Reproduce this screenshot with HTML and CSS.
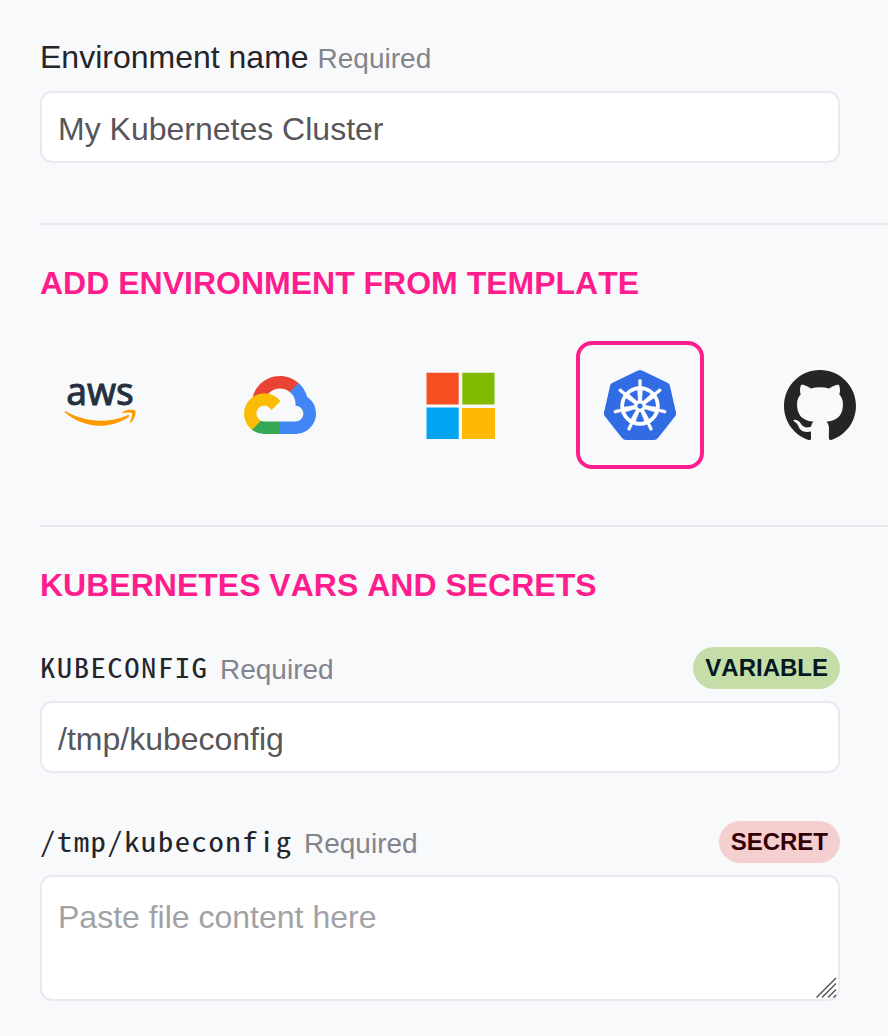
FILE: index.html
```html
<!DOCTYPE html>
<html lang="en">
<head>
<meta charset="utf-8">
<title>Environment</title>
<link rel="stylesheet" href="styles.css">
</head>
<body>
<form class="page">
  <section class="field field-name">
    <div class="label-row"><label for="name"><span class="label">Environment name</span><span class="required">Required</span></label></div>
    <input class="control" id="name" type="text" value="My Kubernetes Cluster">
  </section>

  <section class="section templates-section">
    <h2 class="heading">Add environment from template</h2>
    <div class="templates">
      <div class="template">
        <svg class="aws" width="72" height="43" viewBox="0 0 304 182" overflow="visible">
          <text class="aws-word" x="9" y="95" textLength="286" lengthAdjust="spacingAndGlyphs">aws</text>
          <g fill="#f90"><path d="M273.5 143.7c-32.9 24.3-80.7 37.2-121.8 37.2-57.6 0-109.5-21.3-148.7-56.7-3.1-2.8-.3-6.6 3.4-4.4 42.4 24.6 94.7 39.5 148.8 39.5 36.5 0 76.6-7.6 113.5-23.2 5.5-2.5 10.2 3.6 4.8 7.6z"/><path d="M287.2 128.1c-4.2-5.4-27.8-2.6-38.5-1.3-3.2.4-3.7-2.4-.8-4.5 18.8-13.2 49.7-9.4 53.3-5 3.6 4.5-1 35.4-18.6 50.2-2.7 2.3-5.3 1.1-4.1-1.9 4-9.9 12.9-32.2 8.7-37.5z"/></g>
        </svg>
      </div>
      <div class="template">
        <svg width="72" height="58" viewBox="0 0 256 206">
          <path fill="#ea4335" d="M170.25 56.82L192.5 34.57l1.49-9.37C153.44-11.68 88.98-7.5 52.42 33.92 42.27 45.42 34.73 59.76 30.72 74.57l7.97-1.12 44.5-7.34 3.44-3.51c19.8-21.74 53.27-24.67 76.13-6.17z"/>
          <path fill="#4285f4" d="M224.2 73.92a100.2 100.2 0 0 0-30.21-48.72l-31.23 31.23a55.5 55.5 0 0 1 20.38 44.04v5.54c15.35 0 27.8 12.45 27.8 27.8s-12.45 27.48-27.8 27.48h-55.68l-5.46 5.93v33.34l5.46 5.23h55.68c39.93.31 72.55-31.49 72.86-71.42a72.3 72.3 0 0 0-31.8-60.45"/>
          <path fill="#34a853" d="M71.87 205.8h55.59v-44.51H71.87a27.3 27.3 0 0 1-11.48-2.5l-8.01 2.44-22.41 22.26-1.95 7.55a72.2 72.2 0 0 0 43.85 14.76"/>
          <path fill="#fbbc05" d="M71.87 61.43A72.3 72.3 0 0 0 28.27 190.98l32.25-32.25a27.8 27.8 0 1 1 36.78-36.77l32.25-32.25a72.2 72.2 0 0 0-57.68-28.28"/>
        </svg>
      </div>
      <div class="template">
        <svg width="70" height="67" viewBox="0 0 70 67">
          <path fill="#f65022" d="M1.5.7h32.2v31.7H1.5z"/><path fill="#80ba01" d="M37.3.7h32.2v31.7H37.3z"/><path fill="#02a4f2" d="M1.5 35.5h32.2V67H1.5z"/><path fill="#ffb902" d="M37 36h33v31H37z"/>
        </svg>
      </div>
      <div class="template selected">
        <svg width="72" height="70" viewBox="0 0 72 70">
          <path fill="#326ce5" d="M34 .5q2-1 4 0l25.5 12.2q2 1 2.4 3L72 42.5q.5 2-1 4L54 68q-1.6 2-4 2H22q-2.4 0-4-2L1 46.500q-1.500-2-1-4L6.100 15.700q.4-2 2.400-3z"/>
          <g fill="none" stroke="#fff">
            <circle cx="36" cy="36" r="17.800" stroke-width="3.800"/>
            <circle cx="36" cy="36" r="4.300" stroke-width="3.400"/>
          </g>
          <defs><path id="spoke" fill="#fff" d="M34.300 31.500L33.500 19h1.200l-.2-8.300q0-1.500 1.500-1.500t1.500 1.500l-.2 8.300h1.200l-.8 12.500z" stroke="#fff" stroke-width=".4"/></defs>
          <use href="#spoke"/>
          <use href="#spoke" transform="rotate(51.430 36 36)"/>
          <use href="#spoke" transform="rotate(102.860 36 36)"/>
          <use href="#spoke" transform="rotate(154.290 36 36)"/>
          <use href="#spoke" transform="rotate(205.710 36 36)"/>
          <use href="#spoke" transform="rotate(257.140 36 36)"/>
          <use href="#spoke" transform="rotate(308.570 36 36)"/>
        </svg>
      </div>
      <div class="template">
        <svg width="72" height="70" viewBox="0 0 97.7 96" preserveAspectRatio="none"><path fill="#252528" d="M48.854 0C21.839 0 0 22 0 49.217c0 21.756 13.993 40.172 33.405 46.690 2.427.49 3.316-1.059 3.316-2.362 0-1.141-.08-5.052-.08-9.127-13.590 2.934-16.420-5.867-16.420-5.867-2.184-5.704-5.420-7.170-5.420-7.170-4.448-3.015.324-3.015.324-3.015 4.934.326 7.523 5.052 7.523 5.052 4.367 7.496 11.404 5.378 14.235 4.074.404-3.178 1.699-5.378 3.074-6.600-10.839-1.141-22.243-5.378-22.243-24.283 0-5.378 1.940-9.778 5.014-13.200-.485-1.222-2.184-6.275.486-13.038 0 0 4.125-1.304 13.426 5.052a46.970 46.970 0 0 1 12.214-1.630c4.125 0 8.330.571 12.213 1.630 9.302-6.356 13.427-5.052 13.427-5.052 2.670 6.763.970 11.816.485 13.038 3.155 3.422 5.015 7.822 5.015 13.200 0 18.905-11.404 23.060-22.324 24.283 1.780 1.548 3.316 4.481 3.316 9.126 0 6.600-.080 11.897-.080 13.526 0 1.304.890 2.853 3.316 2.364 19.412-6.520 33.405-24.935 33.405-46.691C97.707 22 75.788 0 48.854 0z"/></svg>
      </div>
    </div>
  </section>

  <section class="section">
    <h2 class="heading">Kubernetes vars and secrets</h2>
    <div class="field field-variable">
      <div class="label-row"><label for="config"><code class="key">KUBECONFIG</code><span class="required">Required</span></label><span class="badge variable">VARIABLE</span></div>
      <input class="control" id="config" type="text" value="/tmp/kubeconfig">
    </div>
    <div class="field field-secret">
      <div class="label-row"><label for="content"><code class="key key-path">/tmp/kubeconfig</code><span class="required">Required</span></label><span class="badge secret">SECRET</span></div>
      <div class="area-wrap">
        <textarea class="control area" id="content" placeholder="Paste file content here"></textarea>
        <svg class="grip" width="22" height="22" viewBox="0 0 22 22"><path d="M.5 20.500L20 1M6 20.500l14-14M12 20.500l8-8M17.500 20.500l2.500-2.500" fill="none" stroke="#555" stroke-width="1.500"/></svg>
      </div>
    </div>
  </section>
</form>
</body>
</html>
```

FILE: styles.css
```css
* { box-sizing: border-box; }
body {
  margin: 0;
  height: 1036px;
  overflow: hidden;
  background: #f8f9fb;
  color: #24252a;
  font-family: "Liberation Sans", Arial, sans-serif;
  font-size: 32px;
}
.page { padding: 35px 0 0 40px; }
.field { width: 800px; }
.field-name { margin-bottom: 60px; }
.label-row {
  display: flex;
  align-items: center;
  justify-content: space-between;
  height: 42px;
  white-space: nowrap;
}
.field-name .label-row { height: 56px; padding-bottom: 12px; }
.required { margin-left: 9px; color: #84848c; font-size: 28px; }
.key {
  display: inline-block;
  margin-right: 23px;
  font-family: "Noto Sans Mono CJK SC", "Noto Sans Mono CJK JP", "DejaVu Sans Mono", monospace;
  font-size: 27px;
  line-height: 32px;
  letter-spacing: 1.3px;
  transform: translateY(-1px) scaleX(1.138);
  transform-origin: left center;
}
.key-path { margin-right: 33px; }
.control {
  display: block;
  width: 800px;
  height: 72px;
  padding: 5px 16px 0;
  border: 2px solid #e8e9f1;
  border-radius: 12px;
  background: #fff;
  color: #56565b;
  font: inherit;
  outline: none;
}
.section { border-top: 2px solid #e8e9f1; }
.heading {
  margin: 0;
  padding-top: 40px;
  color: #ff1d8e;
  font-size: 32px;
  font-kerning: none;
  line-height: 37px;
  text-transform: uppercase;
}
.templates-section { height: 302px; }
.templates { display: flex; gap: 52px; margin: 39px 0 0 -4px; }
.template {
  display: flex;
  flex: none;
  align-items: center;
  justify-content: center;
  width: 128px;
  height: 128px;
  border: 4px solid transparent;
  border-radius: 16px;
}
.selected { border-color: #ff1d8e; }
.aws { margin-bottom: 2px; }
.aws-word { fill: #252f3e; font-family: "Noto Sans", sans-serif; font-size: 160px; font-weight: 400; stroke: #252f3e; stroke-width: 4; }
.badge {
  height: 42px;
  padding: 0 12px;
  border-radius: 21px;
  font-size: 24px;
  font-kerning: none;
  font-weight: bold;
  line-height: 42px;
}
.variable { background: #c5dea8; color: #04191f; }
.secret { background: #f3cfcf; color: #330006; }
.field-variable { margin-top: 43px; }
.field-variable .control, .field-secret .area-wrap { margin-top: 12px; }
.field-secret { margin-top: 48px; }
.area-wrap { position: relative; }
.area { height: 126px; padding: 22px 16px; line-height: 37px; resize: none; }
.area::placeholder { color: #a2a2a6; opacity: 1; }
.grip { position: absolute; right: 2px; bottom: 2px; }
```
